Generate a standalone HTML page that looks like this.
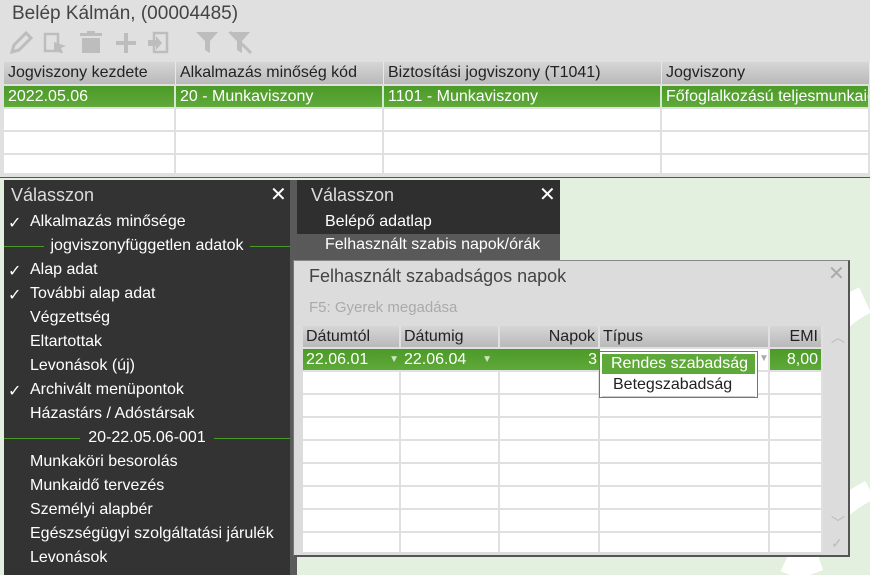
<!DOCTYPE html>
<html><head><meta charset="utf-8"><style>
*{margin:0;padding:0;box-sizing:border-box}
body{width:870px;height:575px;overflow:hidden;position:relative;background:#e3efdf;font-family:"Liberation Sans",Arial,sans-serif;font-size:16px}
.a{position:absolute}
.top{left:0;top:0;width:870px;height:178px;background:#e0e0e0;border-bottom:1px solid #555}
.g{position:absolute;left:4px;top:62px;width:866px}
.row{display:flex;height:23px;border-bottom:2px solid #e0e0e0;background:#fff}
.row div{border-right:2px solid #e0e0e0;padding-left:4px;line-height:22px;white-space:nowrap;overflow:hidden}
.hdr{background:linear-gradient(#d6d6d6,#b9b9b9);color:#222;height:24px}
.hdr div{border-right:1px solid #e8e8e8}
.sel{background:linear-gradient(#4c9a27,#5fa93a);color:#fff}
.sel div{border-right:2px solid #d8e8d0}
.menu{left:4px;top:180px;width:286px;height:395px;background:#333;color:#fff}
.mi{position:absolute;left:26px;font-size:16px}
.ck{position:absolute;left:4px;font-size:16px}
.sep{position:absolute;left:0;width:286px;height:24px}
.sep .ln{position:absolute;top:11px;height:1px;background:#4a9a27}
.sep span{position:absolute;width:100%;text-align:center;top:2px;font-size:16px}
.m2{left:297px;top:180px;width:263px;height:78px;background:#2f2f2f;color:#fff}
.dlg{left:293px;top:260px;width:557px;height:297px;background:#dcdcdc;border:2px solid #555;border-top:1px solid #888;border-left:1px solid #777}
.dg{position:absolute;left:9px;top:65px;width:520px}
.dg .row{height:23px;border-bottom:2px solid #e0e0e0}
.dg .row div{border-right:2px solid #e0e0e0;padding-left:3px}
</style></head><body>
<div class="a top"></div>
<div class="a" style="left:12px;top:3px;font-size:19px;color:#444">Belép Kálmán, (00004485)</div>
<svg class="a" style="left:8px;top:30px" width="250" height="26" viewBox="0 0 250 26" fill="#bdbdbd">
<path d="M4 22 L6 15 L18 3 L23 8 L11 20 Z" fill="none" stroke="#bdbdbd" stroke-width="3"/>
<rect x="37" y="4" width="13" height="17" fill="none" stroke="#bdbdbd" stroke-width="2.5"/><path d="M46 12 L58 16 L53 18 L55 23 L52 23 L50 19 L46 22Z"/>
<rect x="72" y="3" width="22" height="3"/><rect x="79" y="1" width="8" height="3"/><rect x="74" y="8" width="18" height="15"/>
<rect x="108" y="11" width="20" height="4"/><rect x="116" y="3" width="4" height="20"/>
<rect x="146" y="3" width="13" height="19" fill="none" stroke="#bdbdbd" stroke-width="2.5"/><path d="M140 10 h8 v-4 l6 7 -6 7 v-4 h-8z"/>
<path d="M188 2 h22 l-8 9 v12 l-5 -3 v-9z"/><path d="M220 2 h22 l-8 9 v12 l-5 -3 v-9z"/><path d="M222 2 L243 23" stroke="#bdbdbd" stroke-width="3"/>
</svg>
<div class="g">
<div class="row hdr"><div style="width:172px">Jogviszony kezdete</div><div style="width:208px">Alkalmazás minőség kód</div><div style="width:278px">Biztosítási jogviszony (T1041)</div><div style="width:208px">Jogviszony</div></div>
<div class="row sel"><div style="width:172px">2022.05.06</div><div style="width:208px">20 - Munkaviszony</div><div style="width:278px">1101 - Munkaviszony</div><div style="width:208px">Főfoglalkozású teljesmunkaidős</div></div>
<div class="row"><div style="width:172px"></div><div style="width:208px"></div><div style="width:278px"></div><div style="width:208px"></div></div>
<div class="row"><div style="width:172px"></div><div style="width:208px"></div><div style="width:278px"></div><div style="width:208px"></div></div>
<div class="row" style="height:20px"><div style="width:172px"></div><div style="width:208px"></div><div style="width:278px"></div><div style="width:208px"></div></div>
</div>
<svg class="a" style="left:700px;top:240px" width="170" height="335"><path d="M165 60 C100 90 60 200 110 335" fill="none" stroke="#fff" stroke-width="28"/><path d="M170 250 C130 270 100 310 90 335" fill="none" stroke="#fff" stroke-width="20"/></svg>
<div class="a" style="left:290px;top:180px;width:7px;height:395px;background:#5a5a5a"></div>
<div class="a menu">
<div class="a" style="left:7px;top:5px;font-size:18px;color:#ddd">Válasszon</div>
<div class="a" style="left:266px;top:2px;font-size:20px">✕</div>
<div class="ck" style="top:33px">✓</div><div class="mi" style="top:33px">Alkalmazás minősége</div>
<div class="sep" style="top:55px"><div class="ln" style="left:0;width:40px"></div><div class="ln" style="left:246px;width:40px"></div><span>jogviszonyfüggetlen adatok</span></div>
<div class="ck" style="top:81px">✓</div><div class="mi" style="top:81px">Alap adat</div>
<div class="ck" style="top:105px">✓</div><div class="mi" style="top:105px">További alap adat</div>
<div class="mi" style="top:129px">Végzettség</div>
<div class="mi" style="top:153px">Eltartottak</div>
<div class="mi" style="top:177px">Levonások (új)</div>
<div class="ck" style="top:201px">✓</div><div class="mi" style="top:201px">Archivált menüpontok</div>
<div class="mi" style="top:225px">Házastárs / Adóstársak</div>
<div class="sep" style="top:247px"><div class="ln" style="left:0;width:76px"></div><div class="ln" style="left:210px;width:76px"></div><span>20-22.05.06-001</span></div>
<div class="mi" style="top:273px">Munkaköri besorolás</div>
<div class="mi" style="top:297px">Munkaidő tervezés</div>
<div class="mi" style="top:321px">Személyi alapbér</div>
<div class="mi" style="top:345px">Egészségügyi szolgáltatási járulék</div>
<div class="mi" style="top:369px">Levonások</div>
</div>
<div class="a m2">
<div class="a" style="left:14px;top:5px;font-size:18px;color:#ddd">Válasszon</div>
<div class="a" style="left:242px;top:2px;font-size:20px">✕</div>
<div class="a" style="left:28px;top:33px;font-size:16px">Belépő adatlap</div>
</div>
<div class="a" style="left:297px;top:234px;width:263px;height:26px;background:#595959;color:#fff;font-size:16px;padding:2px 0 0 28px">Felhasznált szabis napok/órák</div>
<div class="a dlg">
<div class="a" style="left:15px;top:5px;font-size:18px;color:#444">Felhasznált szabadságos napok</div>
<div class="a" style="left:534px;top:0px;font-size:20px;color:#aaa">✕</div>
<div class="a" style="left:15px;top:38px;font-size:15px;color:#aaa">F5: Gyerek megadása</div>
<div class="dg">
<div class="row hdr" style="height:23px"><div style="width:98px">Dátumtól</div><div style="width:99px">Dátumig</div><div style="width:100px;text-align:right;padding-right:3px">Napok</div><div style="width:170px">Típus</div><div style="width:53px;text-align:right;padding-right:3px">EMI</div></div>
<div class="row sel"><div style="width:98px;border-right:0">22.06.01 <span style="float:right;font-size:10px;color:#cde5c0;padding-right:2px">▼</span></div><div style="width:99px;border-right:0">22.06.04 <span style="float:right;font-size:10px;color:#cde5c0;padding-right:8px">▼</span></div><div style="width:100px;text-align:right;padding-right:3px;border-right:0">3</div><div style="width:170px;background:#fff"></div><div style="width:53px;text-align:right;padding-right:3px">8,00</div></div>
<div class="row"><div style="width:98px"></div><div style="width:99px"></div><div style="width:100px"></div><div style="width:170px"></div><div style="width:53px"></div></div>
<div class="row"><div style="width:98px"></div><div style="width:99px"></div><div style="width:100px"></div><div style="width:170px"></div><div style="width:53px"></div></div>
<div class="row"><div style="width:98px"></div><div style="width:99px"></div><div style="width:100px"></div><div style="width:170px"></div><div style="width:53px"></div></div>
<div class="row"><div style="width:98px"></div><div style="width:99px"></div><div style="width:100px"></div><div style="width:170px"></div><div style="width:53px"></div></div>
<div class="row"><div style="width:98px"></div><div style="width:99px"></div><div style="width:100px"></div><div style="width:170px"></div><div style="width:53px"></div></div>
<div class="row"><div style="width:98px"></div><div style="width:99px"></div><div style="width:100px"></div><div style="width:170px"></div><div style="width:53px"></div></div>
<div class="row"><div style="width:98px"></div><div style="width:99px"></div><div style="width:100px"></div><div style="width:170px"></div><div style="width:53px"></div></div>
<div class="row" style="height:19px;border-bottom:0"><div style="width:98px"></div><div style="width:99px"></div><div style="width:100px"></div><div style="width:170px"></div><div style="width:53px"></div></div>
</div>
<div class="a" style="left:537px;top:66px;color:#bbb;font-size:14px">︿</div>
<div class="a" style="left:537px;top:252px;color:#bbb;font-size:14px">﹀</div>
<div class="a" style="left:537px;top:274px;color:#bbb;font-size:14px">✓</div>
</div>
<div class="a" style="left:599px;top:351px;width:159px;height:47px;background:#fff;border:1px solid #4a9a27">
<div style="margin:2px 2px 0 2px;height:20px;background:#5fa93a;color:#fff;padding-left:9px;line-height:20px;font-size:16px">Rendes szabadság</div>
<div style="padding-left:11px;line-height:22px;font-size:16px;color:#222;border-bottom:1px solid #ccc;margin:0 2px">Betegszabadság</div>
</div>
<div class="a" style="left:759px;top:353px;font-size:10px;color:#aaa">▼</div>
</body></html>
